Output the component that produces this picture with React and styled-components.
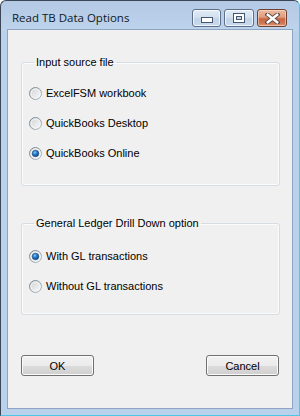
import React, { useState } from 'react';
import styled, { createGlobalStyle } from 'styled-components';

const GlobalStyle = createGlobalStyle`
  html, body {
    margin: 0;
    padding: 0;
    background: #ffffff;
  }
  * {
    box-sizing: border-box;
  }
`;

const Window = styled.div`
  width: 300px;
  height: 416px;
  display: flex;
  flex-direction: column;
  padding: 0 6px 6px 6px;
  border: 1px solid;
  border-color: #3b4657 #52c6e2 #4cc8e6 #3b4657;
  border-radius: 6px 6px 0 0;
  background: linear-gradient(#b3c9e4 0px, #bed3ec 30px, #b9d1ea 31px, #b9d1ea 100%);
`;

const TitleBar = styled.div`
  height: 28px;
  display: flex;
  align-items: flex-start;
  justify-content: space-between;
  padding: 0 6px 0 5px;
`;

const Title = styled.div`
  margin-top: 9px;
  font-family: "Open Sans", "Noto Sans", sans-serif;
  font-size: 11.5px;
  line-height: 15px;
  color: #0e1824;
`;

const Controls = styled.div`
  display: flex;
  gap: 3px;
  margin-top: 8px;
`;

const CaptionButton = styled.div`
  width: ${(p) => p.$w}px;
  height: 18px;
  display: flex;
  align-items: center;
  justify-content: center;
  border: 1px solid ${(p) => (p.$close ? '#6e4232' : '#5d6f88')};
  border-radius: 3px;
  box-shadow: inset 0 0 0 1px ${(p) => (p.$close ? 'rgba(255,225,205,0.55)' : 'rgba(255,255,255,0.7)')};
  background: ${(p) =>
    p.$close
      ? 'linear-gradient(#ecbca4 0%, #e09b7b 45%, #c96743 55%, #cf7450 80%, #dc9878 100%)'
      : 'linear-gradient(#e2ebf6 0%, #d3e0ef 45%, #c1d3e8 55%, #c9d9ec 100%)'};
`;

const Client = styled.div`
  flex: 1;
  display: flex;
  flex-direction: column;
  border: 1px solid #8ea4c0;
  background: #f0f0f0;
  padding: 25px 12px 0 13px;
  font-family: "Liberation Sans", Arial, sans-serif;
  font-size: 11px;
  color: #000;
`;

const Group = styled.fieldset`
  margin: ${(p) => p.$mt || 0}px 0 0 0;
  padding: ${(p) => p.$pt}px 0 ${(p) => p.$pb}px 7px;
  min-width: 0;
  border: 1px solid #d5dce3;
  border-radius: 3px;
  box-shadow: inset 0 0 0 1px #fbfbfb;
`;

const Legend = styled.legend`
  margin-left: 5px;
  padding: 0 2px;
  line-height: 14px;
  font-size: 11px;
`;

const Option = styled.label`
  height: 30px;
  display: flex;
  align-items: center;
  gap: 4px;
  cursor: default;
  line-height: 14px;
`;

const ButtonRow = styled.div`
  display: flex;
  justify-content: space-between;
  margin-top: 40px;
  padding-right: 1px;
`;

const PushButton = styled.button`
  width: 73px;
  height: 21px;
  padding: 0;
  font-family: "Liberation Sans", Arial, sans-serif;
  font-size: 11px;
  color: #000;
  border: 1px solid #707070;
  border-radius: 3px;
  box-shadow: inset 0 0 0 1px #fbfbfb;
  background: linear-gradient(#f2f2f2 0%, #ebebeb 50%, #dddddd 51%, #cfcfcf 100%);
`;

function MinimizeIcon() {
  return (
    <svg width="12" height="10" viewBox="0 0 12 10">
      <rect x="0.5" y="4.5" width="11" height="5" fill="#ffffff" stroke="#45566e" />
    </svg>
  );
}

function MaximizeIcon() {
  return (
    <svg width="12" height="10" viewBox="0 0 12 10">
      <rect x="0.5" y="0.5" width="11" height="9" fill="#ffffff" stroke="#45566e" />
      <rect x="3.5" y="3.5" width="5" height="3" fill="#c8d6e8" stroke="#45566e" />
    </svg>
  );
}

function CloseIcon() {
  return (
    <svg width="15" height="11" viewBox="0 0 15 11">
      <path d="M2.5 1.5 L12.5 9.5 M12.5 1.5 L2.5 9.5" stroke="#5a4a46" strokeWidth="4.2" strokeLinecap="square" />
      <path d="M2.8 1.8 L12.2 9.2 M12.2 1.8 L2.8 9.2" stroke="#ffffff" strokeWidth="2.4" strokeLinecap="square" />
    </svg>
  );
}

function RadioMark({ checked }) {
  return (
    <svg width="13" height="13" viewBox="0 0 13 13">
      <defs>
        <linearGradient id="rimG" x1="0" y1="0" x2="1" y2="1">
          <stop offset="0" stopColor="#6f7f8c" />
          <stop offset="1" stopColor="#b5bcc2" />
        </linearGradient>
        <linearGradient id="faceG" x1="0" y1="0" x2="1" y2="1">
          <stop offset="0" stopColor="#cfd2d5" />
          <stop offset="1" stopColor="#fbfbfb" />
        </linearGradient>
        <radialGradient id="dotG" cx="0.4" cy="0.35" r="0.7">
          <stop offset="0" stopColor="#8ccaf7" />
          <stop offset="0.45" stopColor="#2378c8" />
          <stop offset="1" stopColor="#0c3f78" />
        </radialGradient>
      </defs>
      <circle cx="6.5" cy="6.5" r="6" fill="url(#faceG)" stroke="url(#rimG)" strokeWidth="1" />
      <circle cx="6.5" cy="6.5" r="4.5" fill="none" stroke="#f4f4f4" strokeWidth="1" />
      {checked && <circle cx="6.5" cy="6.5" r="3.3" fill="url(#dotG)" stroke="#1a4f86" strokeWidth="0.6" />}
    </svg>
  );
}

function RadioOption({ label, checked, onSelect }) {
  return (
    <Option onClick={onSelect}>
      <RadioMark checked={checked} />
      <span>{label}</span>
    </Option>
  );
}

const sources = ['ExcelFSM workbook', 'QuickBooks Desktop', 'QuickBooks Online'];
const drillOptions = ['With GL transactions', 'Without GL transactions'];

export default function App() {
  const [source, setSource] = useState(2);
  const [drill, setDrill] = useState(0);

  return (
    <>
      <GlobalStyle />
      <Window>
        <TitleBar>
          <Title>Read TB Data Options</Title>
          <Controls>
            <CaptionButton $w={29}>
              <MinimizeIcon />
            </CaptionButton>
            <CaptionButton $w={30}>
              <MaximizeIcon />
            </CaptionButton>
            <CaptionButton $w={30} $close>
              <CloseIcon />
            </CaptionButton>
          </Controls>
        </TitleBar>
        <Client>
          <Group $pt={9} $pb={17}>
            <Legend>Input source file</Legend>
            {sources.map((s, i) => (
              <RadioOption key={s} label={s} checked={source === i} onSelect={() => setSource(i)} />
            ))}
          </Group>
          <Group $mt={30} $pt={11} $pb={13}>
            <Legend>General Ledger Drill Down option</Legend>
            {drillOptions.map((s, i) => (
              <RadioOption key={s} label={s} checked={drill === i} onSelect={() => setDrill(i)} />
            ))}
          </Group>
          <ButtonRow>
            <PushButton>OK</PushButton>
            <PushButton>Cancel</PushButton>
          </ButtonRow>
        </Client>
      </Window>
    </>
  );
}
